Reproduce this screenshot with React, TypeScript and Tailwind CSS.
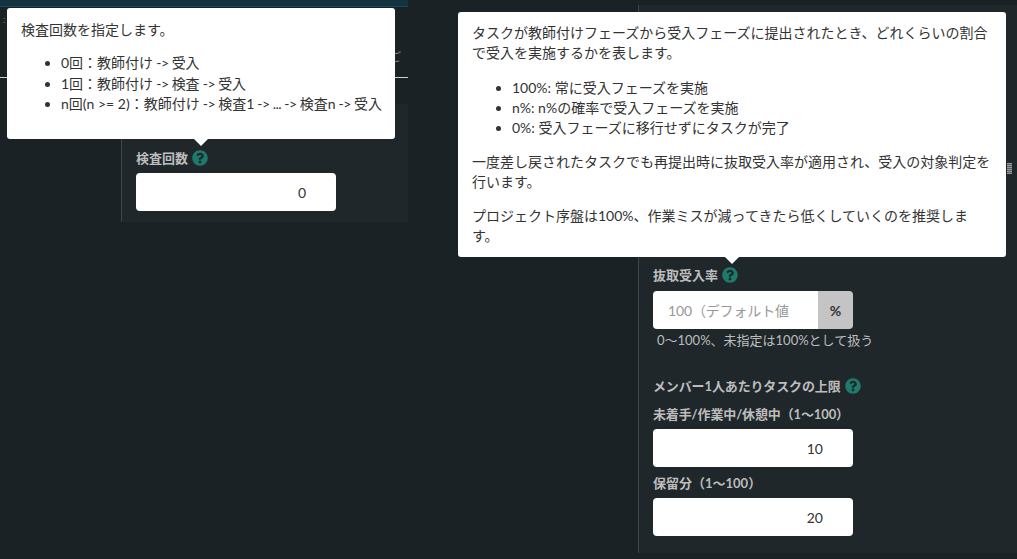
import React from "react";
import { FaQuestionCircle } from "react-icons/fa";

const font = "font-['Lato','Noto_Sans_CJK_JP',sans-serif]";

const HelpLabel = ({ text, className = "" }: { text: string; className?: string }) => (
  <div className={`flex items-center gap-[4px] text-[13px] leading-[18px] font-bold text-[#bdbdbd] ${className}`}>
    <span>{text}</span>
    <FaQuestionCircle className="text-[#1f7a6c] w-[16px] h-[16px]" />
  </div>
);

const Label = ({ text, className = "" }: { text: string; className?: string }) => (
  <div className={`text-[13px] leading-[18px] font-bold text-[#bdbdbd] ${className}`}>{text}</div>
);

const NumberBox = ({ value, className = "" }: { value: string; className?: string }) => (
  <input
    readOnly
    value={value}
    className={`block w-[200px] h-[38px] rounded-[4px] bg-white pr-[30px] text-right text-[14px] text-[#333] outline-none ${className}`}
  />
);

// 矢印の前後は参照画像だと少し詰まっている
const Arrow = () => <span className="tracking-[-0.5px]"> -&gt; </span>;

const Tooltip = ({ className, arrow, children }: { className: string; arrow: string; children: React.ReactNode }) => (
  <div className={`absolute rounded-[3px] bg-white px-[14px] text-[14px] leading-[20px] text-[#333] ${className}`}>
    {children}
    <div className={`absolute top-full w-0 h-0 border-x-[7px] border-t-[7px] border-x-transparent border-t-white ${arrow}`} />
  </div>
);

export default function App() {
  return (
    <div className={`${font} relative flex w-[1017px] h-[559px] overflow-hidden bg-[#1b2226]`}>
      {/* 左側のパネル */}
      <div className="w-[408px] shrink-0">
        <div className="h-[7px] bg-[#12333f] border-b border-[#1d4a58]" />
        <div className="h-[44px] pl-[3px] pt-[6px] text-[10px] leading-[12px] text-[#777]">:</div>
        <div className="h-[26px] text-right text-[11px] leading-[11px] text-[#8a8a8a]">
          <span className="mr-[7px]">ご</span>
        </div>
        <div className="h-px bg-[#d0d0d0]" />
        <div className="mt-[26px] ml-[121px] h-[118px] border-l border-[#3f464a] bg-[#1f272b] pl-[14px] pt-[45px]">
          <HelpLabel text="検査回数" className="mb-[6px]" />
          <NumberBox value="0" />
        </div>
      </div>

      {/* 右側のパネル */}
      <div className="flex-1 pt-[5px]">
        <div className="ml-[230px] h-[548px] border-l border-[#3f464a] bg-[#1f272b] pl-[14px] pt-[261px] relative">
          <HelpLabel text="抜取受入率" className="mb-[7px]" />
          <div className="flex w-[200px] h-[38px] rounded-[4px] overflow-hidden">
            <input
              readOnly
              placeholder="100（デフォルト値"
              className="min-w-0 flex-1 bg-white px-[15px] text-[14px] tracking-[-0.15px] placeholder:text-[#999] outline-none"
            />
            <div className="flex w-[35px] items-center justify-center bg-[#c4c4c4] text-[14px] font-bold text-[#333]">%</div>
          </div>
          <div className="mt-[2px] ml-[4px] text-[13px] leading-[18px] text-[#bdbdbd]">0〜100%、未指定は100%として扱う</div>
          <HelpLabel text="メンバー1人あたりタスクの上限" className="mt-[28px] tracking-[-0.13px]" />
          <Label text="未着手/作業中/休憩中（1〜100）" className="mt-[10px] mb-[6px] tracking-[-0.13px]" />
          <NumberBox value="10" />
          <Label text="保留分（1〜100）" className="mt-[7px] mb-[6px]" />
          <NumberBox value="20" />
          <div className="absolute right-[5px] top-[158px] w-[5px] h-[11px] bg-[repeating-linear-gradient(to_bottom,#9a9a9a_0,#9a9a9a_1px,#5a5f62_1px,#5a5f62_2px)]" />
        </div>
      </div>

      <Tooltip className="left-[7px] top-[8px] w-[388px] h-[131px] pt-[12px]" arrow="left-[187px]">
        <p>検査回数を指定します。</p>
        <ul className="mt-[13px] list-disc pl-[40px] leading-[20.5px]">
          <li>0回：教師付け<Arrow />受入</li>
          <li>1回：教師付け<Arrow />検査<Arrow />受入</li>
          <li className="whitespace-nowrap">
            n回(n &gt;= 2)：教師付け<Arrow />検査1<Arrow /><span className="tracking-[-0.5px]">...</span><Arrow />検査n<Arrow />受入
          </li>
        </ul>
      </Tooltip>

      <Tooltip className="left-[458px] top-[12px] w-[548px] h-[245px] pt-[11px]" arrow="left-[267px]">
        <p>タスクが教師付けフェーズから受入フェーズに提出されたとき、どれくらいの割合で受入を実施するかを表します。</p>
        <ul className="mt-[15px] list-disc pl-[40px]">
          <li>100%: 常に受入フェーズを実施</li>
          <li>n%: n%の確率で受入フェーズを実施</li>
          <li>0%: 受入フェーズに移行せずにタスクが完了</li>
        </ul>
        <p className="mt-[14px]">一度差し戻されたタスクでも再提出時に抜取受入率が適用され、受入の対象判定を行います。</p>
        <p className="mt-[14px]">プロジェクト序盤は100%、作業ミスが減ってきたら低くしていくのを推奨します。</p>
      </Tooltip>
    </div>
  );
}
